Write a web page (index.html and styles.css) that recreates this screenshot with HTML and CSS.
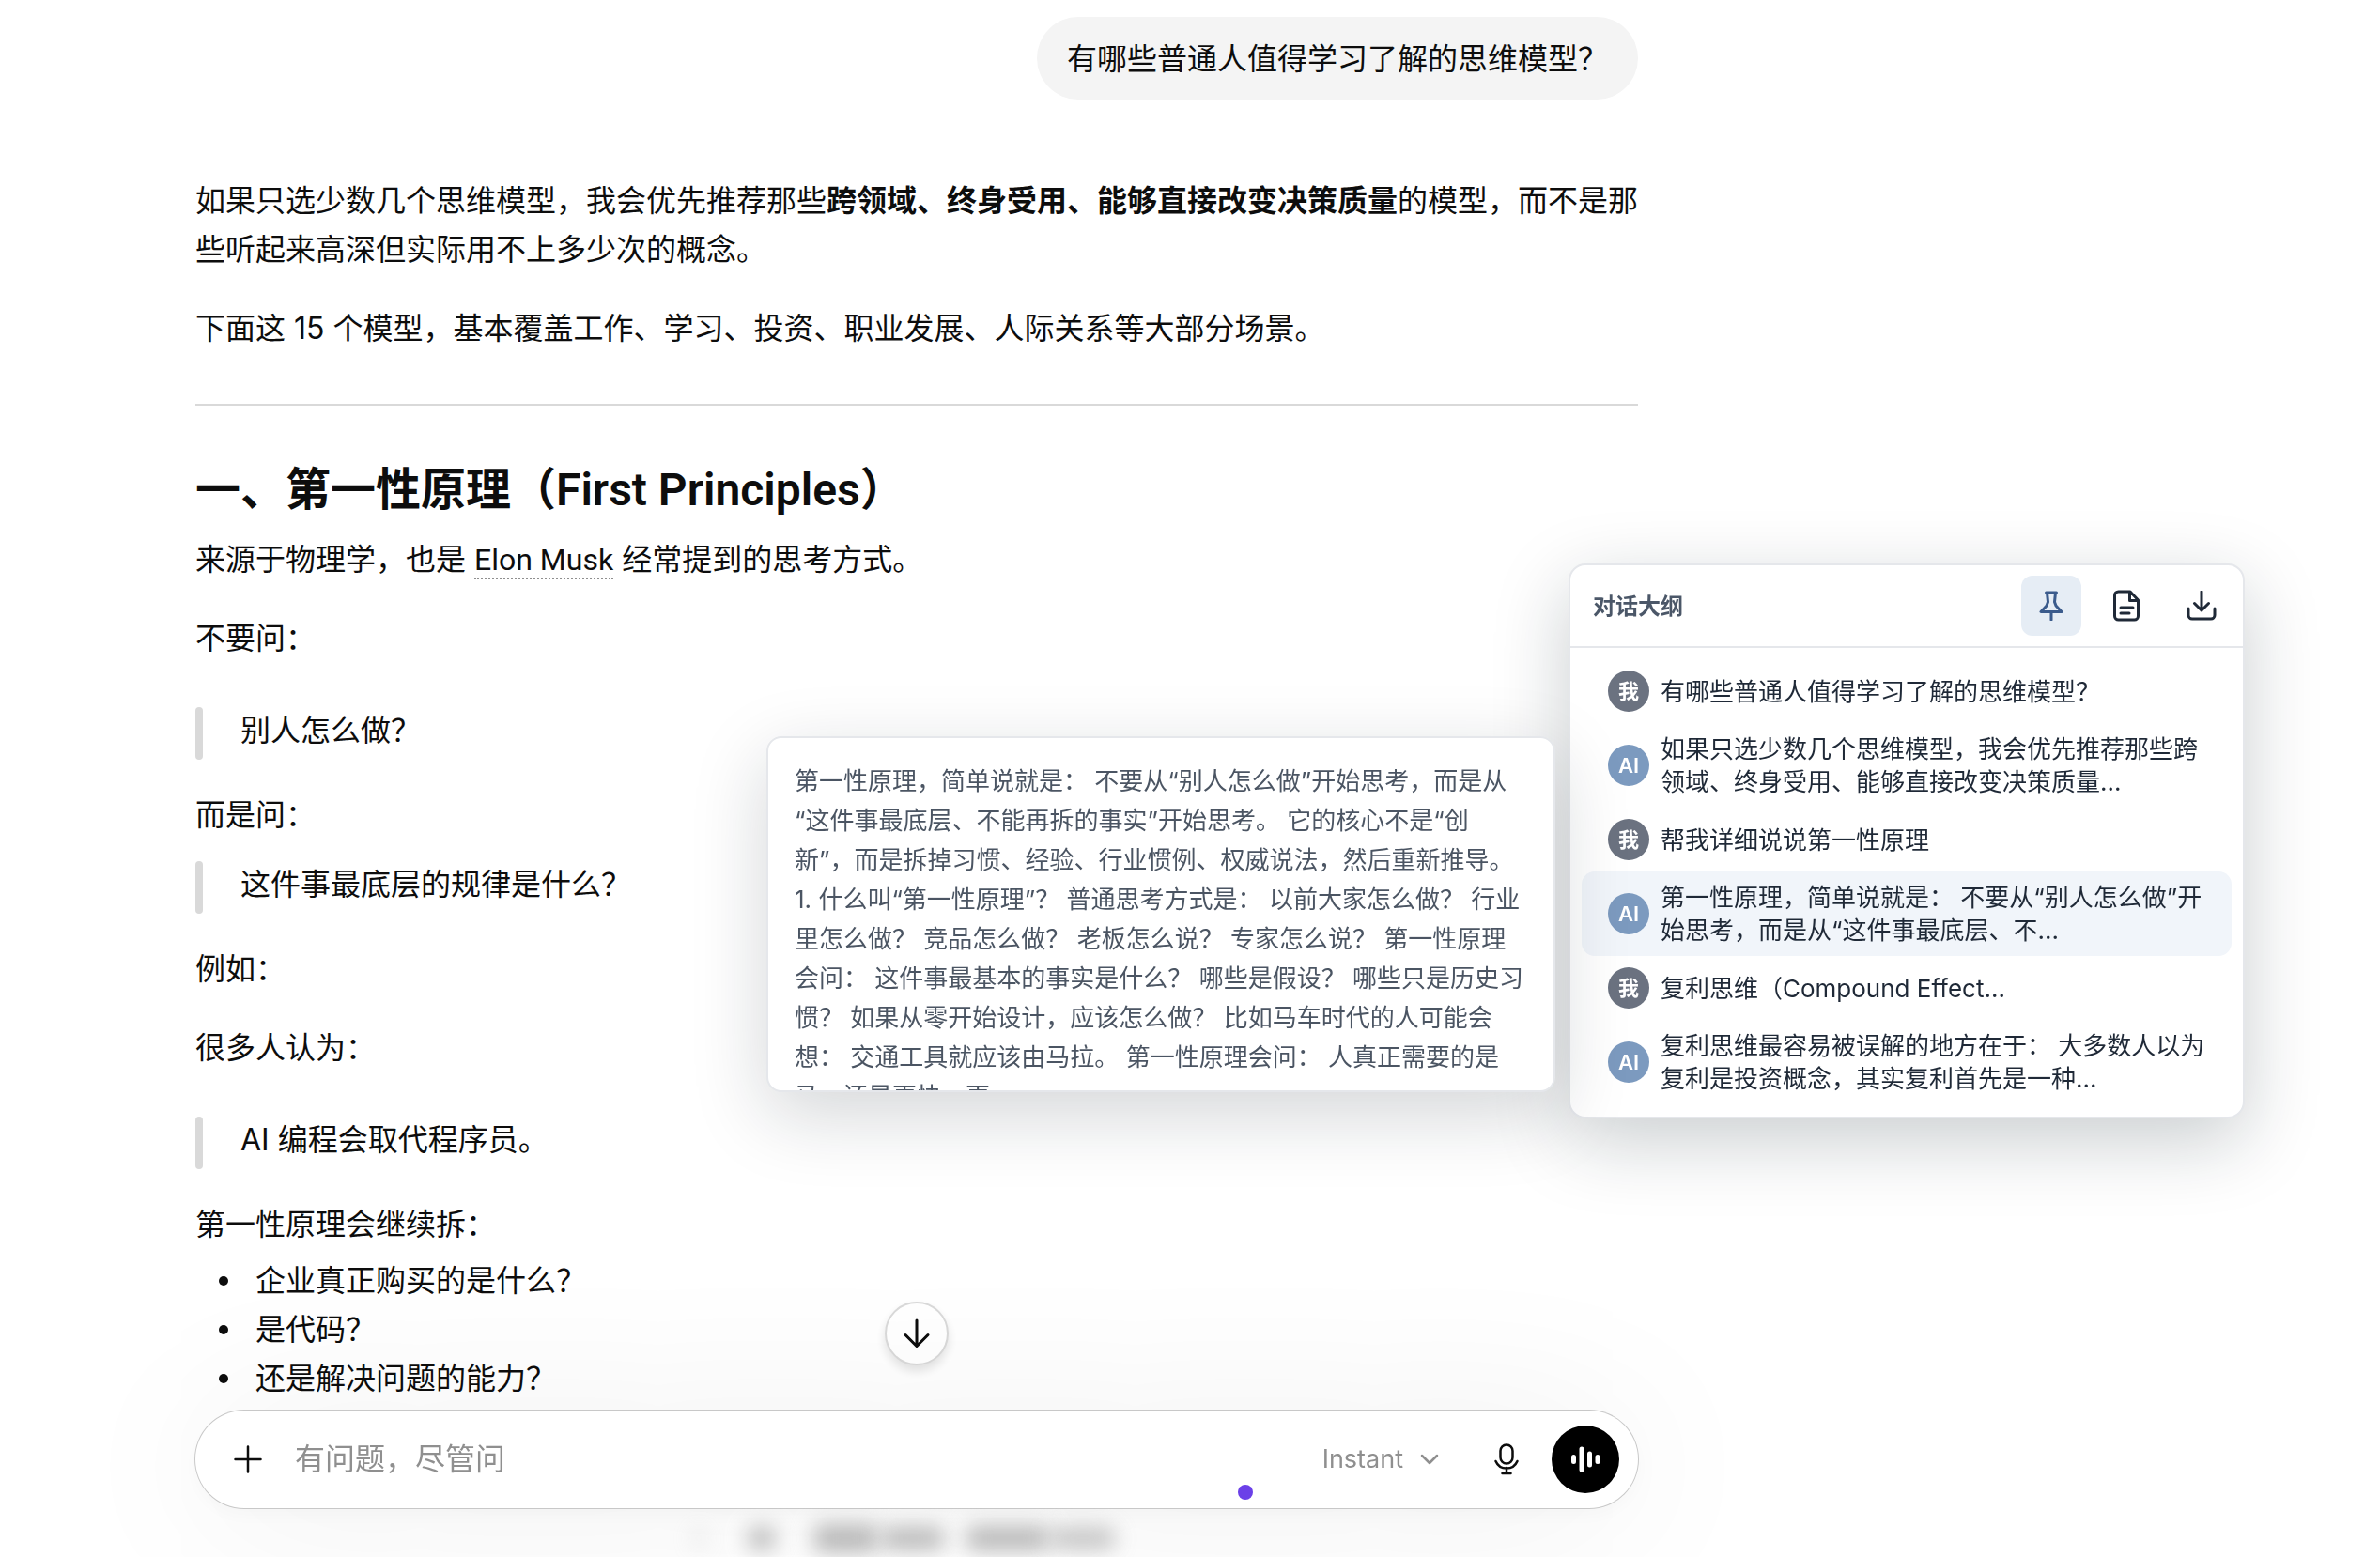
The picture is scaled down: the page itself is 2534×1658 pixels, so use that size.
FILE: index.html
```html
<!DOCTYPE html>
<html lang="zh-CN">
<head>
    <meta charset="UTF-8">
    <meta name="viewport" content="width=device-width, initial-scale=1.0">
    <title>思维模型</title>
    <link rel="stylesheet" href="styles.css">
</head>
<body>
    <main class="chat">
        <div class="question">有哪些普通人值得学习了解的思维模型？</div>

        <article class="answer">
            <p>如果只选少数几个思维模型，我会优先推荐那些<strong>跨领域、终身受用、能够直接改变决策质量</strong>的模型，而不是那些听起来高深但实际用不上多少次的概念。</p>
            <p>下面这 15 个模型，基本覆盖工作、学习、投资、职业发展、人际关系等大部分场景。</p>
            <hr>
            <h2>一、第一性原理（First Principles）</h2>
            <p>来源于物理学，也是 <a href="#" class="entity">Elon Musk</a> 经常提到的思考方式。</p>
            <p>不要问：</p>
            <blockquote>别人怎么做？</blockquote>
            <p>而是问：</p>
            <blockquote class="tight">这件事最底层的规律是什么？</blockquote>
            <p>例如：</p>
            <p>很多人认为：</p>
            <blockquote>AI 编程会取代程序员。</blockquote>
            <p>第一性原理会继续拆：</p>
            <ul>
                <li>企业真正购买的是什么？</li>
                <li>是代码？</li>
                <li>还是解决问题的能力？</li>
            </ul>
        </article>
    </main>

    <!-- 底部输入栏 -->
    <footer class="dock">
        <button class="scroll-btn" type="button" aria-label="滚动到底部">
            <svg width="32" height="32" viewBox="0 0 32 32"><path d="M16 2v27M4 17.500l12 12 12-12"/></svg>
        </button>
        <form class="composer">
            <button class="icon-btn" type="button" aria-label="添加">
                <svg class="thin" width="32" height="32" viewBox="0 0 32 32"><path d="M16 2.500v27M2.500 16h27"/></svg>
            </button>
            <input class="prompt" type="text" placeholder="有问题，尽管问" aria-label="有问题，尽管问">
            <button class="model-btn" type="button">Instant
                <svg class="thin" width="20" height="12" viewBox="0 0 20 12"><path d="M2 2l8 8 8-8"/></svg>
            </button>
            <button class="icon-btn" type="button" aria-label="听写">
                <svg class="thin" width="32" height="36" viewBox="0 0 32 36"><rect x="9.500" y="2.500" width="13" height="20" rx="6.500"/><path d="M4.500 20a12.500 12.500 0 0 0 23 0M16 27v6M11.500 33h9"/></svg>
            </button>
            <button class="voice-btn" type="button" aria-label="语音">
                <svg width="32" height="32" viewBox="0 0 32 32"><path d="M3.500 13.500v5M12 5v22M20.500 10v12M29 13.500v5"/></svg>
            </button>
            <span class="dot"></span>
        </form>
        <div class="haze" aria-hidden="true"><i class="s1"></i><i class="s2"></i><i class="s3"></i><i class="s4"></i><i class="s5"></i><i class="s6"></i></div>
    </footer>

    <aside class="outline">
        <header class="outline-head">
            <h3>对话大纲</h3>
            <button class="tool active" type="button" aria-label="固定">
                <svg width="32" height="32" viewBox="0 0 32 32"><path d="M10.500 2h11M11.500 2l1 10-1.500 4-6 6.500h22L21 16l-1.500-4 1-10M16 22.500V31"/></svg>
            </button>
            <button class="tool" type="button" aria-label="导出文档">
                <svg width="32" height="34" viewBox="0 0 32 34"><path d="M20 2H7.500a4 4 0 0 0-4 4v22a4 4 0 0 0 4 4h17a4 4 0 0 0 4-4V11zM19.500 2v9.500h9M10 19h13M10 25h9"/></svg>
            </button>
            <button class="tool" type="button" aria-label="下载">
                <svg width="32" height="32" viewBox="0 0 32 32"><path d="M16 1v20M8.500 13.500L16 21l7.500-7.500M2 19v7a4 4 0 0 0 4 4h20a4 4 0 0 0 4-4v-7"/></svg>
            </button>
        </header>
        <ul class="outline-list">
            <li><span class="avatar">我</span><span>有哪些普通人值得学习了解的思维模型？</span></li>
            <li><span class="avatar ai">AI</span><span>如果只选少数几个思维模型，我会优先推荐那些跨领域、终身受用、能够直接改变决策质量...</span></li>
            <li><span class="avatar">我</span><span>帮我详细说说第一性原理</span></li>
            <li class="current"><span class="avatar ai">AI</span><span>第一性原理，简单说就是： 不要从“别人怎么做”开始思考，而是从“这件事最底层、不...</span></li>
            <li><span class="avatar">我</span><span>复利思维（Compound Effect...</span></li>
            <li><span class="avatar ai">AI</span><span>复利思维最容易被误解的地方在于： 大多数人以为复利是投资概念，其实复利首先是一种...</span></li>
        </ul>
        <div class="preview">第一性原理，简单说就是： 不要从“别人怎么做”开始思考，而是从“这件事最底层、不能再拆的事实”开始思考。 它的核心不是“创新”，而是拆掉习惯、经验、行业惯例、权威说法，然后重新推导。 1. 什么叫“第一性原理”？ 普通思考方式是： 以前大家怎么做？ 行业里怎么做？ 竞品怎么做？ 老板怎么说？ 专家怎么说？ 第一性原理会问： 这件事最基本的事实是什么？ 哪些是假设？ 哪些只是历史习惯？ 如果从零开始设计，应该怎么做？ 比如马车时代的人可能会想： 交通工具就应该由马拉。 第一性原理会问： 人真正需要的是马，还是更快、更</div>
    </aside>
</body>
</html>
```
FILE: styles.css
```css
* {
    box-sizing: border-box;
}

body {
    margin: 0;
    height: 100vh;
    overflow: hidden;
    background: #fff;
    color: #0d0d0d;
    font-family: Inter, "Noto Sans CJK SC", sans-serif;
    font-size: 32px;
    line-height: 52px;
}

button {
    border: none;
    padding: 0;
    background: none;
    font: inherit;
    color: inherit;
    cursor: pointer;
    display: flex;
    align-items: center;
    justify-content: center;
}

svg {
    fill: none;
    stroke: currentColor;
    stroke-width: 3;
    stroke-linecap: round;
    stroke-linejoin: round;
}

svg.thin {
    stroke-width: 2.5;
}

/* Chat column */
.chat {
    display: flex;
    flex-direction: column;
    max-width: 1536px;
    margin-left: 208px;
    padding-top: 18px;
}

.question {
    align-self: flex-end;
    padding: 19px 32px 17px;
    border-radius: 44px;
    background: #f4f4f4;
}

.answer {
    margin-top: 82px;
}

.answer p {
    margin: 0 -4px 32px 0;
}

.answer strong {
    font-weight: 600;
}

.answer hr {
    margin: 54px 0 58px;
    border: none;
    border-top: 2px solid #d9d9d9;
}

.answer h2 {
    margin: 0 0 16px;
    font-family: Roboto, "Noto Sans CJK SC", sans-serif;
    font-size: 48px;
    font-weight: 600;
    line-height: 64px;
}

.entity {
    color: inherit;
    font-family: Roboto, sans-serif;
    text-decoration: none;
    border-bottom: 2px dotted #8f8f8f;
}

.answer blockquote {
    position: relative;
    margin: 47px 0 33px;
    padding: 0 0 6px 48px;
    line-height: 50px;
}

.answer blockquote.tight {
    margin-top: -9px;
}

.answer blockquote::before {
    content: "";
    position: absolute;
    left: 0;
    top: 0;
    width: 8px;
    height: 100%;
    border-radius: 4px;
    background: #d9d9d9;
}

.answer ul {
    margin: -24px 0 0;
    padding-left: 25px;
    list-style: none;
}

.answer li {
    display: flex;
    align-items: center;
    gap: 29px;
}

.answer li::before {
    content: "";
    width: 10px;
    height: 10px;
    border-radius: 50%;
    background: #0d0d0d;
}

/* Composer */
.dock {
    position: fixed;
    left: 208px;
    bottom: 0;
    width: 1536px;
}

.scroll-btn {
    width: 68px;
    height: 68px;
    margin: 0 auto 48px;
    border: 2px solid #d9d9d9;
    border-radius: 50%;
    background: #fff;
    box-shadow: 0 6px 12px rgba(0, 0, 0, 0.12);
}

.composer {
    position: relative;
    display: flex;
    align-items: center;
    height: 104px;
    padding: 0 20px;
    border-radius: 52px;
    background: #fff;
    box-shadow: 0 0 0 1px #c8c8c8, 0 8px 180px rgba(0, 0, 0, 0.07), 0 8px 24px rgba(0, 0, 0, 0.03);
}

.icon-btn {
    width: 72px;
    height: 72px;
}

.prompt {
    flex: 1;
    min-width: 0;
    border: none;
    outline: none;
    padding: 0 14px;
    background: none;
    font: inherit;
    color: inherit;
}

.prompt::placeholder {
    color: #8f8f8f;
    opacity: 1;
}

.model-btn {
    gap: 18px;
    margin-right: 36px;
    font-size: 27px;
    color: #8f8f8f;
}

.voice-btn {
    width: 72px;
    height: 72px;
    margin-left: 12px;
    border-radius: 50%;
    background: #000;
    color: #fff;
}

.voice-btn svg {
    stroke-width: 5;
}

.dot {
    position: absolute;
    left: 1110px;
    bottom: 9px;
    width: 16px;
    height: 16px;
    border-radius: 50%;
    background: #6b40e8;
}

/* Blurred strip under the composer */
.haze {
    display: flex;
    align-items: center;
    height: 52px;
    padding: 12px 0 0 528px;
    overflow: hidden;
}

.haze i {
    height: 24px;
    border-radius: 10px;
    background: #b8b8b8;
    filter: blur(11px);
}

.haze .s1 {
    width: 16px;
    opacity: 0.2;
}

.haze .s2 {
    width: 30px;
    margin-left: 44px;
}

.haze .s3 {
    width: 70px;
    height: 30px;
    margin-left: 40px;
}

.haze .s4 {
    width: 68px;
    margin-left: 2px;
}

.haze .s5 {
    width: 90px;
    height: 26px;
    margin-left: 22px;
}

.haze .s6 {
    width: 70px;
    opacity: 0.8;
}

/* Outline panel */
.outline {
    position: fixed;
    right: 144px;
    top: 600px;
    width: 720px;
    border: 2px solid #e5e7eb;
    border-radius: 18px;
    background: #fff;
    color: #1f2937;
    font-size: 26px;
    line-height: 35px;
    box-shadow: 0 24px 80px rgba(15, 30, 40, 0.22);
}

.outline-head {
    display: flex;
    align-items: center;
    gap: 16px;
    padding: 11px 12px 11px 24px;
    border-bottom: 2px solid #e5e7eb;
}

.outline-head h3 {
    flex: 1;
    margin: 0;
    font-size: 24px;
    font-weight: 600;
    color: #4b5768;
}

.tool {
    width: 64px;
    height: 64px;
    border-radius: 12px;
}

.tool.active {
    background: #e6edf5;
    color: #3b5b8c;
}

.outline-list {
    display: flex;
    flex-direction: column;
    gap: 2px;
    margin: 0;
    padding: 14px 12px 13px;
    list-style: none;
}

.outline-list li {
    display: flex;
    align-items: center;
    gap: 12px;
    padding: 10px 28px;
    border-radius: 14px;
}

.outline-list .current {
    background: #f1f5fa;
}

.avatar {
    flex: none;
    width: 44px;
    height: 44px;
    border-radius: 50%;
    background: #6b7280;
    color: #fff;
    font-size: 22px;
    font-weight: 600;
    line-height: 44px;
    text-align: center;
}

.avatar.ai {
    background: #7c9abf;
}

/* Message preview beside the panel */
.preview {
    position: absolute;
    right: 732px;
    top: 182px;
    width: 840px;
    height: 379px;
    padding: 25px 28px 0;
    overflow: hidden;
    border: 2px solid #e5e7eb;
    border-radius: 16px;
    background: #fff;
    color: #4b5563;
    line-height: 42px;
    box-shadow: 0 24px 80px rgba(15, 30, 40, 0.18);
}
```
